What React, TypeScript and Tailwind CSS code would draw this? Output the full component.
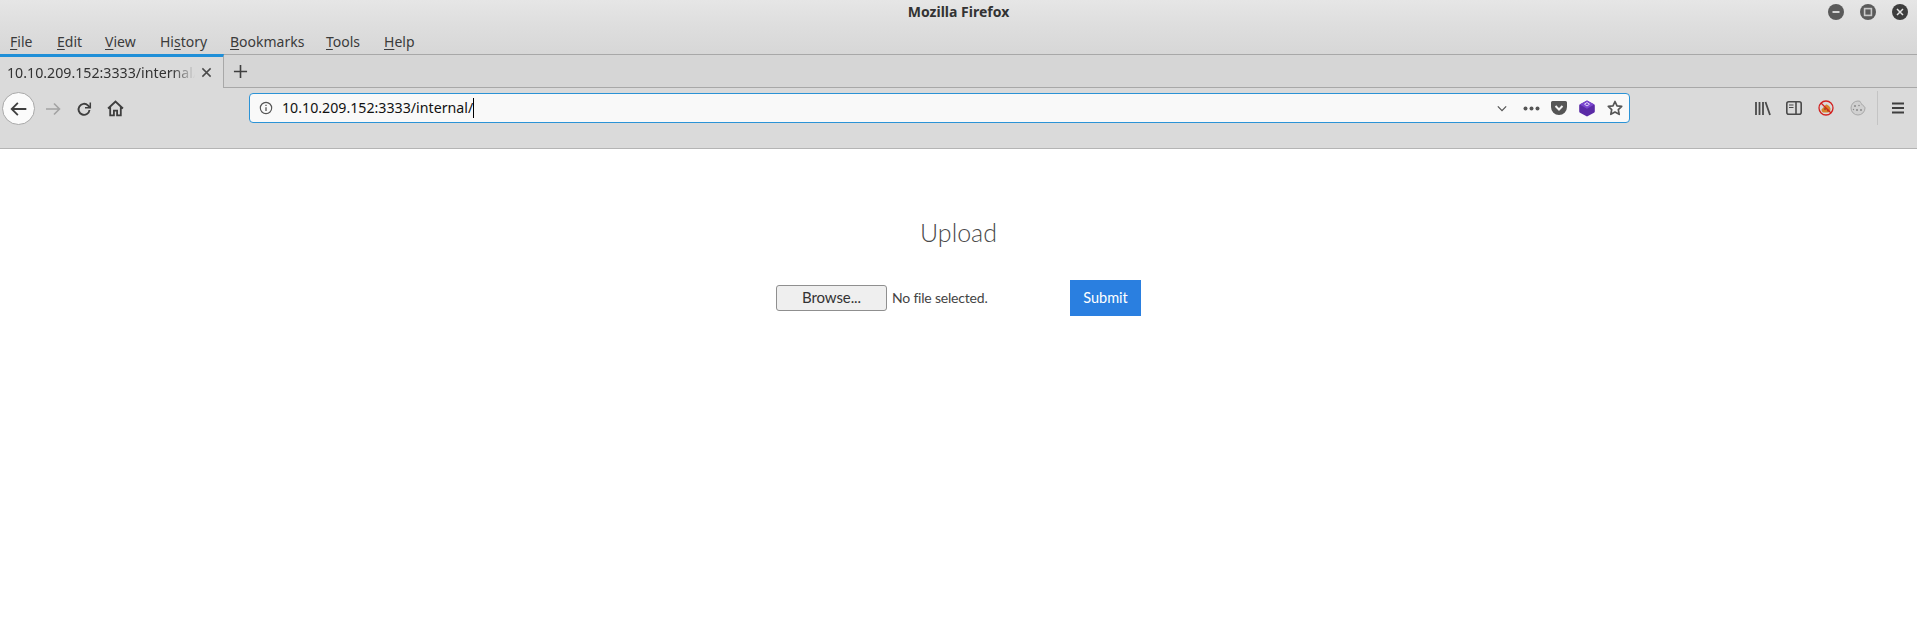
import React from "react";

const ui = { fontFamily: '"Noto Sans", "Open Sans", sans-serif' };

function Mnemonic({ pre, u, post, w }: { pre?: string; u: string; post: string; w: string }) {
  return (
    <span className={`text-[14px] text-[#3b3b3b] ${w}`}>
      {pre}
      <span className="underline underline-offset-2">{u}</span>
      {post}
    </span>
  );
}

function WinBtn({ kind }: { kind: "min" | "max" | "close" }) {
  return (
    <div className={`flex h-4 w-4 items-center justify-center rounded-full ${kind === "close" ? "bg-[#3d3d3d]" : "bg-[#5a5a5a]"}`}>
      <svg width="10" height="10" viewBox="0 0 10 10" fill="none" stroke="#e4e4e4" strokeWidth="1.8">
        {kind === "min" && <path d="M1.5 5h7" />}
        {kind === "max" && <rect x="1.6" y="1.6" width="6.8" height="6.8" strokeWidth="1.6" stroke="#c8c8c8" />}
        {kind === "close" && <path d="M2 2l6 6M8 2l-6 6" strokeWidth="1.5" />}
      </svg>
    </div>
  );
}

export default function App() {
  return (
    <div className="flex h-[640px] w-[1917px] flex-col overflow-hidden bg-white" style={ui}>
      <div className="relative flex h-[25px] shrink-0 items-center justify-center bg-gradient-to-b from-[#e6e6e6] to-[#dedede] pb-[2px]">
        <span className="text-[14px] font-bold text-[#333]">Mozilla Firefox</span>
        <div className="absolute right-[9px] top-[4px] flex gap-4">
          <WinBtn kind="min" />
          <WinBtn kind="max" />
          <WinBtn kind="close" />
        </div>
      </div>
      <div className="flex h-[29px] shrink-0 items-center bg-gradient-to-b from-[#dedede] to-[#d7d7d7] pl-[10px] pt-[4px]">
        <Mnemonic u="F" post="ile" w="w-[47px]" />
        <Mnemonic u="E" post="dit" w="w-[48px]" />
        <Mnemonic u="V" post="iew" w="w-[55px]" />
        <Mnemonic pre="Hi" u="s" post="tory" w="w-[70px]" />
        <Mnemonic u="B" post="ookmarks" w="w-[96px]" />
        <Mnemonic u="T" post="ools" w="w-[58px]" />
        <Mnemonic u="H" post="elp" w="w-[40px]" />
      </div>
      <div className="flex h-[34px] shrink-0 border-t border-b border-[#a8a8a8] bg-[#d6d6d6]">
        <div className="-mb-[1px] -mt-[1px] flex w-[224px] items-center border-r border-t-[3px] border-[#a8a8a8] border-t-[#1f8fd8] bg-[#dadada] pl-[7px]">
          <span className="w-[188px] overflow-hidden whitespace-nowrap text-[14.2px] text-[#333]" style={{ maskImage: "linear-gradient(to right, black 88%, transparent)" }}>
            10.10.209.152:3333/internal/
          </span>
          <svg width="11" height="11" viewBox="0 0 12 12" className="ml-[6px]" stroke="#4a4a4a" strokeWidth="1.6">
            <path d="M1.5 1.5l9 9M10.500 1.500l-9 9" />
          </svg>
        </div>
        <div className="flex w-[32px] items-center justify-center">
          <svg width="15" height="15" viewBox="0 0 16 16" stroke="#3f3f3f" strokeWidth="1.7">
            <path d="M8 1v14M1 8h14" />
          </svg>
        </div>
      </div>
      <div className="flex h-[61px] shrink-0 items-start border-b border-[#b4b4b4] bg-[#dadada]">
        <div className="mt-[4px] ml-[2px] flex items-center">
          <div className="flex h-[33px] w-[33px] items-center justify-center rounded-full border border-[#a8a8a8] bg-[#fbfbfb]">
            <svg width="18" height="18" viewBox="0 0 16 16" fill="none" stroke="#3f3f3f" strokeWidth="1.6">
              <path d="M14.500 8h-13M7 2.500L1.500 8 7 13.500" />
            </svg>
          </div>
          <svg width="16" height="16" viewBox="0 0 16 16" fill="none" stroke="#a3a3a3" strokeWidth="1.6" className="ml-[10px]">
            <path d="M1 8h13.500M9 2.500L14.500 8 9 13.500" />
          </svg>
          <svg width="16" height="16" viewBox="0 0 16 16" fill="none" stroke="#3f3f3f" strokeWidth="1.9" className="ml-[15px]">
            <path d="M13.500 9a5.500 5.500 0 1 1-1.600-4.600L14 6.500" />
            <path d="M14.300 1.500v5.300H9" strokeWidth="1.500" />
          </svg>
          <svg width="17" height="17" viewBox="0 0 16 16" fill="none" stroke="#3f3f3f" strokeWidth="1.7" className="ml-[15px]">
            <path d="M1 8l7-6.500L15 8M3 6.500V14.500h3.500V10h3v4.500H13V6.500" />
          </svg>
        </div>
        <div className="mt-[5px] ml-[125px] flex h-[30px] w-[1381px] items-center rounded-[4px] border border-[#2b93d6] bg-[#f9f9f9] pl-[9px] pr-[6px]">
          <svg width="14" height="14" viewBox="0 0 16 16" fill="none" stroke="#555">
            <circle cx="8" cy="8" r="6.500" strokeWidth="1.300" />
            <path d="M8 7v4.500M8 4.200v1.600" strokeWidth="1.500" />
          </svg>
          <span className="ml-[9px] text-[14.2px] text-[#111]">10.10.209.152:3333/internal/</span>
          <span className="h-[20px] w-px bg-black" />
          <div className="ml-auto flex items-center">
            <svg width="10" height="7" viewBox="0 0 12 8" fill="none" stroke="#555" strokeWidth="1.500"><path d="M1 1.500l5 5 5-5" /></svg>
            <svg width="17" height="5" viewBox="0 0 17 5" fill="#555" className="ml-[16px]"><circle cx="2.500" cy="2.500" r="2" /><circle cx="8.500" cy="2.500" r="2" /><circle cx="14.500" cy="2.500" r="2" /></svg>
            <svg width="16" height="15" viewBox="0 0 16 15" className="ml-[11px]">
              <path d="M1.500 0h13A1.500 1.500 0 0 1 16 1.500V6a8 8 0 0 1-16 0V1.500A1.500 1.500 0 0 1 1.500 0z" fill="#555" />
              <path d="M4.500 5L8 8.500 11.500 5" fill="none" stroke="#f4f4f4" strokeWidth="2" />
            </svg>
            <svg width="16" height="17" viewBox="0 0 16 17" className="ml-[12px]">
              <path d="M8 .5l7 3.800a1.500 1.500 0 0 1 .8 1.300v5.800a1.500 1.500 0 0 1-.8 1.300l-7 3.800-7-3.800a1.500 1.500 0 0 1-.8-1.300V5.600a1.500 1.500 0 0 1 .8-1.300z" fill="#5a2aa6" />
              <path d="M8 .5l7.300 4L8 8.800.7 4.500z" fill="#7a45cf" />
              <path d="M8 2.500l2.500 1.700L8 6 5.500 4.200z" fill="none" stroke="#e0d4f8" strokeWidth="1" />
            </svg>
            <svg width="16" height="16" viewBox="0 0 16 16" fill="none" stroke="#555" strokeWidth="1.700" className="ml-[12px]">
              <path d="M8 1.500l2 4.300 4.700.6-3.400 3.200.9 4.700L8 12l-4.200 2.300.9-4.700L1.300 6.400 6 5.800z" strokeLinejoin="round" />
            </svg>
          </div>
        </div>
        <div className="mt-[3px] ml-auto flex h-[34px] items-center pr-[12px]">
          <svg width="16" height="15" viewBox="0 0 16 15" fill="none" stroke="#4a4a4a" strokeWidth="1.800">
            <path d="M1 1v13M4.500 1v13M8 1v13M10.500 1l4.500 13" />
          </svg>
          <svg width="16" height="14" viewBox="0 0 16 14" fill="none" stroke="#4a4a4a" strokeWidth="1.600" className="ml-[15px]">
            <rect x=".8" y=".8" width="14.400" height="12.400" rx="2" />
            <path d="M10 1v12" />
            <path d="M3 4h4.500M3 6.500h4.500" strokeWidth="1.200" />
          </svg>
          <svg width="16" height="16" viewBox="0 0 16 16" className="ml-[16px]">
            <path d="M3.500 9.500L8 4.500c2 0 4.500 2.500 4.500 4.500 0 2-1 3.500-3 3.500h-4C4 12.500 3.500 11 3.500 9.500z" fill="#d8822a" />
            <circle cx="7" cy="9" r=".9" fill="#8a4a12" />
            <circle cx="10" cy="10.500" r=".9" fill="#8a4a12" />
            <circle cx="8" cy="8" r="7" fill="none" stroke="#d2201f" strokeWidth="1.300" />
            <path d="M3 3l10 10" stroke="#d2201f" strokeWidth="1.300" />
          </svg>
          <svg width="16" height="16" viewBox="0 0 16 16" className="ml-[16px]">
            <path d="M8 1a7 7 0 1 0 7 7c0-1-.6-1.400-1.200-1.500-.2-1.200-1-1.800-2-1.800C11.600 3 10 2.400 10 1.300 9.300 1.100 8.700 1 8 1z" fill="#d0d0d0" stroke="#a8a8a8" />
            <circle cx="5" cy="6" r="1" fill="#8a8a8a" />
            <circle cx="9" cy="5.500" r=".8" fill="#8a8a8a" />
            <circle cx="7" cy="10" r="1" fill="#8a8a8a" />
            <circle cx="11" cy="10" r="1" fill="#8a8a8a" />
            <circle cx="3.500" cy="9.500" r=".7" fill="#8a8a8a" />
          </svg>
          <div className="ml-[11px] h-[34px] w-px bg-[#c4c4c4]" />
          <svg width="14" height="12" viewBox="0 0 14 12" stroke="#3f3f3f" strokeWidth="1.800" className="ml-[13px]">
            <path d="M1 1.500h12M1 6h12M1 10.500h12" />
          </svg>
        </div>
      </div>
      <div className="flex flex-1 flex-col items-center bg-white" style={{ fontFamily: 'Lato, "Open Sans", sans-serif' }}>
        <h1 className="mt-[61px] text-[25px] leading-[44px] font-light text-[#4a4a4a]">Upload</h1>
        <div className="mt-[26px] flex w-[365px] items-center justify-between">
          <div className="-mt-[1px] flex items-center">
            <button className="h-[26px] w-[111px] rounded-[3px] border border-[#8f8f8f] bg-[#efefef] text-[15px] tracking-[-0.1px] text-[#333]">Browse...</button>
            <span className="-mt-[1px] ml-[5px] text-[14px] tracking-[-0.2px] text-[#444]">No file selected.</span>
          </div>
          <button className="h-9 w-[71px] bg-[#2a7fe0] text-[14.5px] text-white">Submit</button>
        </div>
      </div>
    </div>
  );
}
